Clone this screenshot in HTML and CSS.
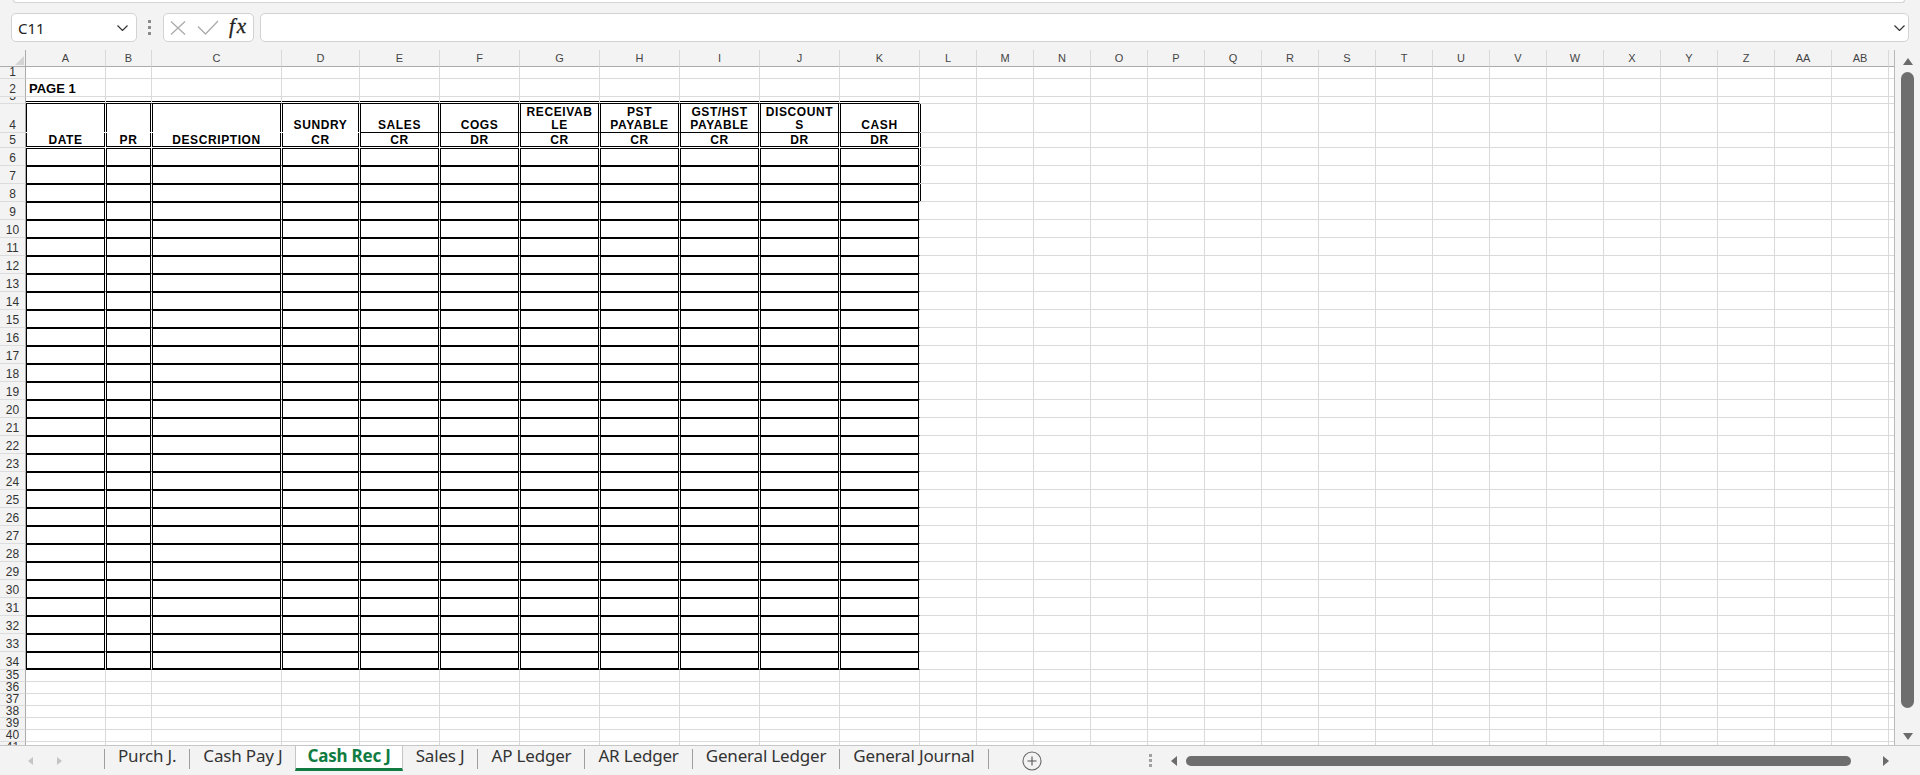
FILE: index.html
```html
<!DOCTYPE html>
<html lang="en">
<head>
<meta charset="utf-8">
<title>Cash Rec J</title>
<link rel="stylesheet" href="styles.css">
</head>
<body>
<div class="top">
  <div class="strip"></div>
  <div class="fbar">
    <div class="namebox"><span class="ref">C11</span><svg class="chev" width="11" height="6" viewBox="0 0 11 6"><path d="M.5 .5 5.5 5.5 10.5 .5" fill="none" stroke="#333" stroke-width="1.2"/></svg></div>
    <div class="grip"><i></i><i></i><i></i></div>
    <div class="fxbox">
      <svg width="16" height="14" viewBox="0 0 16 14"><path d="M1 .5 15 13.5M15 .5 1 13.5" stroke="#ababab" stroke-width="1.3" fill="none"/></svg>
      <svg class="ok" width="22" height="15" viewBox="0 0 22 15"><path d="M1 6.5 8.5 14 21 1" fill="none" stroke="#ababab" stroke-width="1.3"/></svg>
      <span class="fx">fx</span>
    </div>
    <div class="formula"><svg class="chev" width="11" height="6" viewBox="0 0 11 6"><path d="M.5 .5 5.5 5.5 10.5 .5" fill="none" stroke="#333" stroke-width="1.2"/></svg></div>
  </div>
</div>
<div class="main">
  <div class="sheet">
    <div class="ch"><i class="corner"></i><i>A</i><i>B</i><i>C</i><i>D</i><i>E</i><i>F</i><i>G</i><i>H</i><i>I</i><i>J</i><i>K</i><i>L</i><i>M</i><i>N</i><i>O</i><i>P</i><i>Q</i><i>R</i><i>S</i><i>T</i><i>U</i><i>V</i><i>W</i><i>X</i><i>Y</i><i>Z</i><i>AA</i><i>AB</i><i>AC</i></div>
    <div class="r y12"><b>1</b><i></i><i></i><i></i><i></i><i></i><i></i><i></i><i></i><i></i><i></i><i></i><span></span></div>
    <div class="r y18"><b>2</b><i class="pg">PAGE 1</i><i></i><i></i><i></i><i></i><i></i><i></i><i></i><i></i><i></i><i></i><span></span></div>
    <div class="r y7 t"><b>3</b><i></i><i></i><i></i><i></i><i></i><i></i><i></i><i></i><i></i><i></i><i></i><span></span></div>
    <div class="r y29 j hd1 x"><b>4</b><i></i><i></i><i></i><i>SUNDRY</i><i>SALES</i><i>COGS</i><i>RECEIVAB<br>LE</i><i>PST<br>PAYABLE</i><i>GST/HST<br>PAYABLE</i><i>DISCOUNT<br>S</i><i>CASH</i><span></span></div>
    <div class="r y15 j hd2 x"><b>5</b><i>DATE</i><i>PR</i><i>DESCRIPTION</i><i>CR</i><i>CR</i><i>DR</i><i>CR</i><i>CR</i><i>CR</i><i>DR</i><i>DR</i><span></span></div>
    <div class="r y18 j d x"><b>6</b><i></i><i></i><i></i><i></i><i></i><i></i><i></i><i></i><i></i><i></i><i></i><span></span></div>
    <div class="r y18 j d x"><b>7</b><i></i><i></i><i></i><i></i><i></i><i></i><i></i><i></i><i></i><i></i><i></i><span></span></div>
    <div class="r y18 j d x"><b>8</b><i></i><i></i><i></i><i></i><i></i><i></i><i></i><i></i><i></i><i></i><i></i><span></span></div>
    <div class="r y18 j d"><b>9</b><i></i><i></i><i></i><i></i><i></i><i></i><i></i><i></i><i></i><i></i><i></i><span></span></div>
    <div class="r y18 j d"><b>10</b><i></i><i></i><i></i><i></i><i></i><i></i><i></i><i></i><i></i><i></i><i></i><span></span></div>
    <div class="r y18 j d"><b>11</b><i></i><i></i><i></i><i></i><i></i><i></i><i></i><i></i><i></i><i></i><i></i><span></span></div>
    <div class="r y18 j d"><b>12</b><i></i><i></i><i></i><i></i><i></i><i></i><i></i><i></i><i></i><i></i><i></i><span></span></div>
    <div class="r y18 j d"><b>13</b><i></i><i></i><i></i><i></i><i></i><i></i><i></i><i></i><i></i><i></i><i></i><span></span></div>
    <div class="r y18 j d"><b>14</b><i></i><i></i><i></i><i></i><i></i><i></i><i></i><i></i><i></i><i></i><i></i><span></span></div>
    <div class="r y18 j d"><b>15</b><i></i><i></i><i></i><i></i><i></i><i></i><i></i><i></i><i></i><i></i><i></i><span></span></div>
    <div class="r y18 j d"><b>16</b><i></i><i></i><i></i><i></i><i></i><i></i><i></i><i></i><i></i><i></i><i></i><span></span></div>
    <div class="r y18 j d"><b>17</b><i></i><i></i><i></i><i></i><i></i><i></i><i></i><i></i><i></i><i></i><i></i><span></span></div>
    <div class="r y18 j d"><b>18</b><i></i><i></i><i></i><i></i><i></i><i></i><i></i><i></i><i></i><i></i><i></i><span></span></div>
    <div class="r y18 j d"><b>19</b><i></i><i></i><i></i><i></i><i></i><i></i><i></i><i></i><i></i><i></i><i></i><span></span></div>
    <div class="r y18 j d"><b>20</b><i></i><i></i><i></i><i></i><i></i><i></i><i></i><i></i><i></i><i></i><i></i><span></span></div>
    <div class="r y18 j d"><b>21</b><i></i><i></i><i></i><i></i><i></i><i></i><i></i><i></i><i></i><i></i><i></i><span></span></div>
    <div class="r y18 j d"><b>22</b><i></i><i></i><i></i><i></i><i></i><i></i><i></i><i></i><i></i><i></i><i></i><span></span></div>
    <div class="r y18 j d"><b>23</b><i></i><i></i><i></i><i></i><i></i><i></i><i></i><i></i><i></i><i></i><i></i><span></span></div>
    <div class="r y18 j d"><b>24</b><i></i><i></i><i></i><i></i><i></i><i></i><i></i><i></i><i></i><i></i><i></i><span></span></div>
    <div class="r y18 j d"><b>25</b><i></i><i></i><i></i><i></i><i></i><i></i><i></i><i></i><i></i><i></i><i></i><span></span></div>
    <div class="r y18 j d"><b>26</b><i></i><i></i><i></i><i></i><i></i><i></i><i></i><i></i><i></i><i></i><i></i><span></span></div>
    <div class="r y18 j d"><b>27</b><i></i><i></i><i></i><i></i><i></i><i></i><i></i><i></i><i></i><i></i><i></i><span></span></div>
    <div class="r y18 j d"><b>28</b><i></i><i></i><i></i><i></i><i></i><i></i><i></i><i></i><i></i><i></i><i></i><span></span></div>
    <div class="r y18 j d"><b>29</b><i></i><i></i><i></i><i></i><i></i><i></i><i></i><i></i><i></i><i></i><i></i><span></span></div>
    <div class="r y18 j d"><b>30</b><i></i><i></i><i></i><i></i><i></i><i></i><i></i><i></i><i></i><i></i><i></i><span></span></div>
    <div class="r y18 j d"><b>31</b><i></i><i></i><i></i><i></i><i></i><i></i><i></i><i></i><i></i><i></i><i></i><span></span></div>
    <div class="r y18 j d"><b>32</b><i></i><i></i><i></i><i></i><i></i><i></i><i></i><i></i><i></i><i></i><i></i><span></span></div>
    <div class="r y18 j d"><b>33</b><i></i><i></i><i></i><i></i><i></i><i></i><i></i><i></i><i></i><i></i><i></i><span></span></div>
    <div class="r y18 j d last"><b>34</b><i></i><i></i><i></i><i></i><i></i><i></i><i></i><i></i><i></i><i></i><i></i><span></span></div>
    <div class="r y12"><b>35</b><i></i><i></i><i></i><i></i><i></i><i></i><i></i><i></i><i></i><i></i><i></i><span></span></div>
    <div class="r y12"><b>36</b><i></i><i></i><i></i><i></i><i></i><i></i><i></i><i></i><i></i><i></i><i></i><span></span></div>
    <div class="r y12"><b>37</b><i></i><i></i><i></i><i></i><i></i><i></i><i></i><i></i><i></i><i></i><i></i><span></span></div>
    <div class="r y12"><b>38</b><i></i><i></i><i></i><i></i><i></i><i></i><i></i><i></i><i></i><i></i><i></i><span></span></div>
    <div class="r y12"><b>39</b><i></i><i></i><i></i><i></i><i></i><i></i><i></i><i></i><i></i><i></i><i></i><span></span></div>
    <div class="r y12"><b>40</b><i></i><i></i><i></i><i></i><i></i><i></i><i></i><i></i><i></i><i></i><i></i><span></span></div>
    <div class="r y12"><b>41</b><i></i><i></i><i></i><i></i><i></i><i></i><i></i><i></i><i></i><i></i><i></i><span></span></div>
  </div>
  <div class="vs"><i class="up"></i><i class="vthumb"></i><i class="dn"></i></div>
</div>
<div class="tabs">
  <div class="nav"><i class="tl"></i><i class="tr"></i></div>
  <div class="tab first">Purch J.</div>
  <div class="tab pre">Cash Pay J</div>
  <div class="tab on">Cash Rec J</div>
  <div class="tab">Sales J</div>
  <div class="tab">AP Ledger</div>
  <div class="tab">AR Ledger</div>
  <div class="tab">General Ledger</div>
  <div class="tab">General Journal</div>
  <div class="add"><svg width="20" height="20" viewBox="0 0 20 20"><circle cx="10" cy="10" r="9" fill="none" stroke="#666" stroke-width="1.1"/><path d="M10 5.5v9M5.5 10h9" stroke="#555" stroke-width="1.1"/></svg></div>
  <div class="hs">
    <div class="hgrip"><i></i><i></i><i></i></div>
    <i class="al"></i>
    <i class="hthumb"></i>
    <i class="ar"></i>
  </div>
</div>
</body>
</html>
```

FILE: styles.css
```css
html, body {
  margin: 0;
  height: 775px;
  overflow: hidden;
  background: #f3f3f3;
  font-family: "Liberation Sans", Arial, sans-serif;
}

/* ---------- formula bar ---------- */
.top {
  height: 50px;
  box-sizing: border-box;
}
.strip {
  height: 3px;
  box-sizing: border-box;
  margin: 0 15px 0 13px;
  background: #fff;
  border: 1px solid #d4d4d4;
  border-top: 0;
  border-radius: 0 0 5px 5px;
}
.fbar {
  display: flex;
  align-items: center;
  height: 29px;
  margin-top: 10px;
  padding-left: 11px;
}
.namebox {
  width: 126px;
  height: 29px;
  box-sizing: border-box;
  background: #fff;
  border: 1px solid #d2d2d2;
  border-radius: 5px;
  display: flex;
  align-items: center;
  justify-content: space-between;
  padding: 0 8px 0 6px;
}
.ref {
  font: 15px "Noto Sans", sans-serif;
  color: #222;
}
.grip {
  margin-left: 11px;
  display: flex;
  flex-direction: column;
  gap: 3px;
}
.grip i {
  display: block;
  width: 3px;
  height: 3px;
  background: #8c8c8c;
}
.fxbox {
  margin-left: 12px;
  width: 91px;
  height: 29px;
  box-sizing: border-box;
  background: #fff;
  border: 1px solid #d2d2d2;
  border-radius: 5px;
  display: flex;
  align-items: center;
  padding-left: 6px;
}
.fxbox .ok {
  margin-left: 11px;
}
.fx {
  margin-left: 10px;
  margin-top: -2px;
  font: italic 21px/1 "Liberation Serif", serif;
  letter-spacing: 2px;
  color: #222;
  -webkit-text-stroke: .3px #222;
}
.formula {
  flex: 1;
  margin: 0 11px 0 6px;
  height: 29px;
  box-sizing: border-box;
  background: #fff;
  border: 1px solid #d2d2d2;
  border-radius: 5px;
  display: flex;
  align-items: center;
  justify-content: flex-end;
  padding-right: 3px;
}

/* ---------- sheet ---------- */
.main {
  display: flex;
  height: 695px;
}
.sheet {
  flex: 1;
  overflow: hidden;
  background: #fff;
  border-right: 1px solid #b8b8b8;
}
.ch {
  display: grid;
  grid-template-columns: 26px 80px 46px 130px 78px repeat(7, 80px) repeat(18, 57px);
  height: 17px;
}
.ch > i {
  box-sizing: border-box;
  background: #f3f3f3;
  border-right: 1px solid #d9d9d9;
  border-bottom: 1px solid #ababab;
  font: 11px/16px "Liberation Sans", Arial, sans-serif;
  font-style: normal;
  color: #444;
  text-align: center;
}
.ch > .corner {
  border-right-color: #ababab;
  display: flex;
  justify-content: flex-end;
  align-items: flex-end;
  padding: 0 1px 1px 0;
}
.corner::after {
  content: "";
  border-left: 9px solid transparent;
  border-bottom: 9px solid #d4d4d4;
}

.r {
  display: grid;
  grid-template-columns: 26px 80px 46px 130px 78px repeat(7, 80px) 1fr;
}
.r > * {
  box-sizing: border-box;
  min-width: 0;
  overflow: hidden;
  border-right: 1px solid #dadada;
  border-bottom: 1px solid #dadada;
}
.r > b {
  background: #f3f3f3;
  border-right-color: #ababab;
  border-bottom-color: #dcdcdc;
  font: 400 12px/14px "Liberation Sans", Arial, sans-serif;
  color: #333;
  display: flex;
  align-items: flex-end;
  justify-content: center;
}
.r > i {
  font-style: normal;
  display: flex;
  align-items: flex-end;
  justify-content: center;
  text-align: center;
}
.r > span {
  border-right: 0;
  background: repeating-linear-gradient(90deg, transparent 0 56px, #dadada 56px 57px);
}

.y7 { height: 7px; }
.y12 { height: 12px; }
.y12 > b { line-height: 12px; }
.y15 { height: 15px; }
.y18 { height: 18px; }
.y29 { height: 29px; }

.r > .pg {
  justify-content: flex-start;
  padding-left: 3px;
  font: 700 13px/15px "Liberation Sans", Arial, sans-serif;
  color: #000;
}

/* journal table borders */
.t > i {
  border-bottom-color: #000;
  box-shadow: inset 0 -1px #fff, inset 0 -2px #000;
}
.j > i {
  border-right-color: #fff;
  box-shadow: inset 1px 0 #000, inset -1px 0 #000;
  font: 700 12px/12px "Liberation Sans", Arial, sans-serif;
  letter-spacing: .6px;
  color: #000;
}
.hd1 > i {
  line-height: 13px;
  border-bottom-color: #000;
}
.hd1 > i:nth-of-type(-n+4) {
  border-bottom-color: #fff;
}
.hd2 > i {
  padding-bottom: 1px;
  border-bottom-color: #fff;
  box-shadow: inset 1px 0 #000, inset -1px 0 #000, inset 0 -1px #000;
}
.d > i {
  border-bottom-color: #000;
  box-shadow: inset 1px 0 #000, inset -1px 0 #000, inset 0 1px #000;
}
.d.last > i {
  box-shadow: inset 1px 0 #000, inset -1px 0 #000, inset 0 1px #000, inset 0 -1px #000;
}
.x > span {
  box-shadow: inset 1px 0 #000;
}

/* vertical scrollbar */
.vs {
  width: 25px;
  display: flex;
  flex-direction: column;
  align-items: center;
  background: #f3f3f3;
}
.vs i {
  display: block;
}
.up {
  margin-top: 8px;
  width: 0;
  border-left: 5px solid transparent;
  border-right: 5px solid transparent;
  border-bottom: 7px solid #6b6b6b;
}
.vthumb {
  margin-top: 7px;
  width: 13px;
  height: 636px;
  border-radius: 7px;
  background: #6e6e6e;
}
.dn {
  margin-top: 25px;
  width: 0;
  border-left: 5px solid transparent;
  border-right: 5px solid transparent;
  border-top: 7px solid #6b6b6b;
}

/* ---------- sheet tabs ---------- */
.tabs {
  height: 30px;
  box-sizing: border-box;
  border-top: 1px solid #c6c6c6;
  display: flex;
  align-items: flex-start;
  background: #f3f3f3;
}
.nav {
  width: 104px;
  height: 29px;
  display: flex;
  align-items: center;
}
.nav i {
  display: block;
  width: 0;
  border-top: 4.5px solid transparent;
  border-bottom: 4.5px solid transparent;
}
.nav .tl {
  margin-left: 28px;
  border-right: 5px solid #c4c4c4;
}
.nav .tr {
  margin-left: 24px;
  border-left: 5px solid #c4c4c4;
}
.tab {
  height: 20px;
  margin-top: 3px;
  padding: 0 13px;
  border-right: 1px solid #9e9e9e;
  font: 17px/14px "Noto Sans", sans-serif;
  letter-spacing: -.18px;
  color: #333;
  white-space: nowrap;
}
.tab.first {
  border-left: 1px solid #9e9e9e;
}
.tab.pre {
  border-right: 0;
}
.tab.on {
  height: 25px;
  margin-top: 0;
  padding: 3px 11px 0;
  box-sizing: border-box;
  background: #fff;
  border-left: 1px solid #c6c6c6;
  border-right: 1px solid #c6c6c6;
  border-bottom: 3px solid #107c41;
  font-weight: 700;
  letter-spacing: -.2px;
  color: #107c41;
}
.add {
  margin: 5px 0 0 33px;
  height: 20px;
}
.hs {
  margin-left: auto;
  width: 784px;
  height: 29px;
  display: flex;
  align-items: center;
}
.hs i {
  display: block;
}
.hgrip {
  margin-left: 13px;
  display: flex;
  flex-direction: column;
  gap: 2px;
}
.hgrip i {
  width: 3px;
  height: 3px;
  background: #a0a0a0;
}
.al {
  margin-left: 19px;
  width: 0;
  border-top: 5px solid transparent;
  border-bottom: 5px solid transparent;
  border-right: 6px solid #6b6b6b;
}
.hthumb {
  margin-left: 9px;
  width: 665px;
  height: 10px;
  border-radius: 5px;
  background: #6e6e6e;
}
.ar {
  margin-left: 32px;
  width: 0;
  border-top: 5px solid transparent;
  border-bottom: 5px solid transparent;
  border-left: 6px solid #6b6b6b;
}
```
